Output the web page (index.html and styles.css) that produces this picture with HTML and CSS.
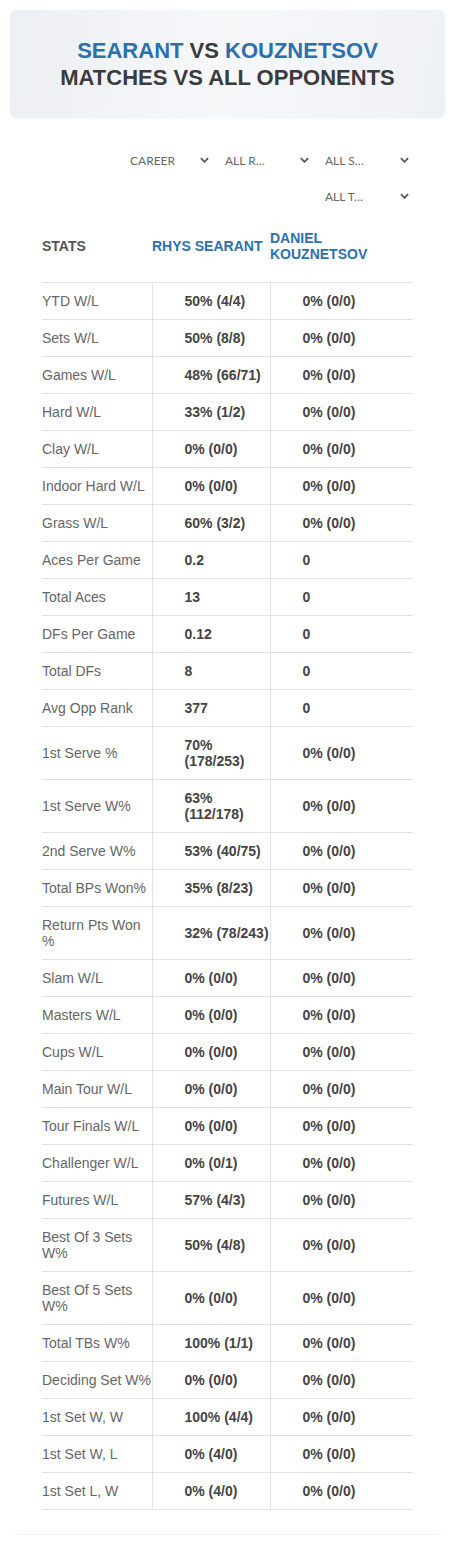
FILE: index.html
```html
<!DOCTYPE html>
<html lang="en">
<head>
    <meta charset="UTF-8">
    <meta name="viewport" content="width=device-width, initial-scale=1.0">
    <title>Searant vs Kouznetsov</title>
    <link rel="stylesheet" href="styles.css">
</head>
<body>
    <div class="hero">
        <h1><span class="blue">SEARANT</span> VS <span class="blue">KOUZNETSOV</span><br>MATCHES VS ALL OPPONENTS</h1>
    </div>

    <div class="card">
        <div class="filters">
            <div class="select"><span>CAREER</span><svg viewBox="0 0 10 6"><path d="M1 1l4 4 4-4"/></svg></div>
            <div class="select"><span>ALL R…</span><svg viewBox="0 0 10 6"><path d="M1 1l4 4 4-4"/></svg></div>
            <div class="select"><span>ALL S…</span><svg viewBox="0 0 10 6"><path d="M1 1l4 4 4-4"/></svg></div>
            <div class="select"><span>ALL T…</span><svg viewBox="0 0 10 6"><path d="M1 1l4 4 4-4"/></svg></div>
        </div>

        <table class="stats">
            <thead>
                <tr>
                    <th class="label">STATS</th>
                    <th class="player">RHYS SEARANT</th>
                    <th class="player">DANIEL KOUZNETSOV</th>
                </tr>
            </thead>
            <tbody id="rows"></tbody>
        </table>
    </div>

    <script>
        const rows = [
            ['YTD W/L', '50% (4/4)', '0% (0/0)'],
            ['Sets W/L', '50% (8/8)', '0% (0/0)'],
            ['Games W/L', '48% (66/71)', '0% (0/0)'],
            ['Hard W/L', '33% (1/2)', '0% (0/0)'],
            ['Clay W/L', '0% (0/0)', '0% (0/0)'],
            ['Indoor Hard W/L', '0% (0/0)', '0% (0/0)'],
            ['Grass W/L', '60% (3/2)', '0% (0/0)'],
            ['Aces Per Game', '0.2', '0'],
            ['Total Aces', '13', '0'],
            ['DFs Per Game', '0.12', '0'],
            ['Total DFs', '8', '0'],
            ['Avg Opp Rank', '377', '0'],
            ['1st Serve %', '70% (178/253)', '0% (0/0)'],
            ['1st Serve W%', '63% (112/178)', '0% (0/0)'],
            ['2nd Serve W%', '53% (40/75)', '0% (0/0)'],
            ['Total BPs Won%', '35% (8/23)', '0% (0/0)'],
            ['Return Pts Won %', '32% (78/243)', '0% (0/0)'],
            ['Slam W/L', '0% (0/0)', '0% (0/0)'],
            ['Masters W/L', '0% (0/0)', '0% (0/0)'],
            ['Cups W/L', '0% (0/0)', '0% (0/0)'],
            ['Main Tour W/L', '0% (0/0)', '0% (0/0)'],
            ['Tour Finals W/L', '0% (0/0)', '0% (0/0)'],
            ['Challenger W/L', '0% (0/1)', '0% (0/0)'],
            ['Futures W/L', '57% (4/3)', '0% (0/0)'],
            ['Best Of 3 Sets W%', '50% (4/8)', '0% (0/0)'],
            ['Best Of 5 Sets W%', '0% (0/0)', '0% (0/0)'],
            ['Total TBs W%', '100% (1/1)', '0% (0/0)'],
            ['Deciding Set W%', '0% (0/0)', '0% (0/0)'],
            ['1st Set W, W', '100% (4/4)', '0% (0/0)'],
            ['1st Set W, L', '0% (4/0)', '0% (0/0)'],
            ['1st Set L, W', '0% (4/0)', '0% (0/0)']
        ];

        const body = document.getElementById('rows');
        rows.forEach(function (r) {
            const tr = document.createElement('tr');
            tr.innerHTML = '<td class="label">' + r[0] + '</td><td class="val">' + r[1] + '</td><td class="val">' + r[2] + '</td>';
            body.appendChild(tr);
        });
    </script>
</body>
</html>
```

FILE: styles.css
```css
body {
    font-family: 'Liberation Sans', Arial, sans-serif;
    background-color: #fff;
    color: #444;
    margin: 0;
    padding: 10px;
}
.hero {
    background: linear-gradient(100deg, #eceff3 0%, #f6f8fa 50%, #eef1f5 100%);
    border-radius: 6px;
    height: 108px;
    display: flex;
    align-items: center;
    justify-content: center;
    box-shadow: 0 1px 2px rgba(0, 0, 0, 0.04);
}
.hero h1 {
    margin: 0;
    text-align: center;
    font-size: 22px;
    line-height: 27px;
    font-weight: bold;
    color: #3b3b3b;
}
.hero .blue {
    color: #2c70ae;
}
.card {
    margin-top: 10px;
    padding: 14px 32px 24px;
    border-radius: 8px;
    box-shadow: 0 1px 1px rgba(0, 0, 0, 0.06);
}
.filters {
    display: flex;
    flex-wrap: wrap;
    justify-content: flex-end;
    column-gap: 10px;
}
.select {
    width: 90px;
    height: 36px;
    box-sizing: border-box;
    padding: 0 4px 0 2px;
    display: flex;
    align-items: center;
    justify-content: space-between;
    font-family: Lato, sans-serif;
    font-size: 12px;
    color: #666;
}
.select:first-child {
    padding-left: 7px;
}
.select svg {
    width: 9px;
    height: 6px;
    fill: none;
    stroke: #555;
    stroke-width: 2;
}
.stats {
    width: 100%;
    border-collapse: collapse;
    table-layout: fixed;
    font-size: 14px;
    line-height: 16px;
}
.stats th {
    text-align: left;
    font-weight: bold;
    padding: 16px 0 20px;
    border-bottom: 1px solid #e2e2e2;
    color: #2c70ae;
}
.stats th.label {
    width: 110px;
    color: #555;
}
.stats th:nth-child(2) {
    width: 118px;
}
.stats td {
    padding: 10px 0;
    border-bottom: 1px solid #e2e2e2;
    vertical-align: middle;
}
.stats td.label {
    color: #666;
}
.stats td.val {
    font-weight: bold;
    color: #444;
    padding-left: 32px;
    border-left: 1px solid #e2e2e2;
}
```
